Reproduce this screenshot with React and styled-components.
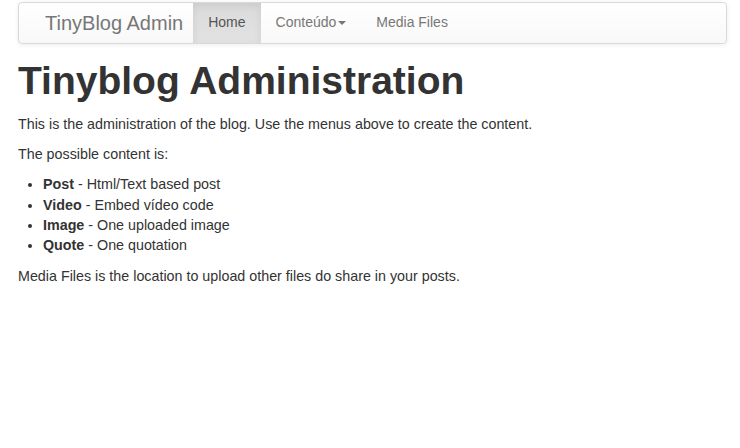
import React from 'react';
import styled, { createGlobalStyle } from 'styled-components';

const GlobalStyle = createGlobalStyle`
  body {
    margin: 0;
    background: #fff;
    font-family: "Liberation Sans", Arial, Helvetica, sans-serif;
    font-size: 14.3px;
    line-height: 1.42;
    color: #333;
  }
`;

const Page = styled.div`
  padding: 2px 13px 0 18px;
`;

const Navbar = styled.nav`
  display: flex;
  align-items: stretch;
  height: 40px;
  border: 1px solid #d9d9d9;
  border-radius: 4px;
  background: linear-gradient(to bottom, #ffffff 0%, #f8f8f8 100%);
  box-shadow: inset 0 1px 0 rgba(255, 255, 255, 0.15), 0 1px 5px rgba(0, 0, 0, 0.075);
  font-size: 14px;
`;

const Brand = styled.a`
  display: flex;
  align-items: center;
  padding: 0 10px 0 26px;
  font-size: 20px;
  color: #777;
  text-decoration: none;
`;

const NavList = styled.ul`
  display: flex;
  margin: 0;
  padding: 0;
  list-style: none;
`;

const NavLink = styled.a`
  display: flex;
  align-items: center;
  height: 100%;
  padding: 0 15px;
  color: ${(p) => (p.$active ? '#555' : '#777')};
  text-decoration: none;
  background: ${(p) => (p.$active ? 'linear-gradient(to bottom, #dbdbdb 0%, #e2e2e2 100%)' : 'transparent')};
  box-shadow: ${(p) => (p.$active ? 'inset 0 3px 9px rgba(0, 0, 0, 0.075)' : 'none')};
`;

const Caret = styled.span`
  display: inline-block;
  width: 0;
  height: 0;
  margin-left: 2px;
  border-top: 4px solid #777;
  border-left: 4px solid transparent;
  border-right: 4px solid transparent;
`;

const Title = styled.h1`
  margin: 16px 0 11px;
  font-size: 39px;
  font-weight: bold;
  line-height: 1.1;
`;

const Para = styled.p`
  margin: 0 0 10px;
`;

const List = styled.ul`
  margin: 0 0 10px;
  padding-left: 25px;
`;

function App() {
  return (
    <>
      <GlobalStyle />
      <Page>
        <Navbar>
          <Brand href="#">TinyBlog Admin</Brand>
          <NavList>
            <li><NavLink href="#" $active>Home</NavLink></li>
            <li><NavLink href="#">Conteúdo<Caret /></NavLink></li>
            <li><NavLink href="#">Media Files</NavLink></li>
          </NavList>
        </Navbar>
        <Title>Tinyblog Administration</Title>
        <Para>This is the administration of the blog. Use the menus above to create the content.</Para>
        <Para>The possible content is:</Para>
        <List>
          <li><strong>Post</strong> - Html/Text based post</li>
          <li><strong>Video</strong> - Embed vídeo code</li>
          <li><strong>Image</strong> - One uploaded image</li>
          <li><strong>Quote</strong> - One quotation</li>
        </List>
        <Para>Media Files is the location to upload other files do share in your posts.</Para>
      </Page>
    </>
  );
}

export default App;
